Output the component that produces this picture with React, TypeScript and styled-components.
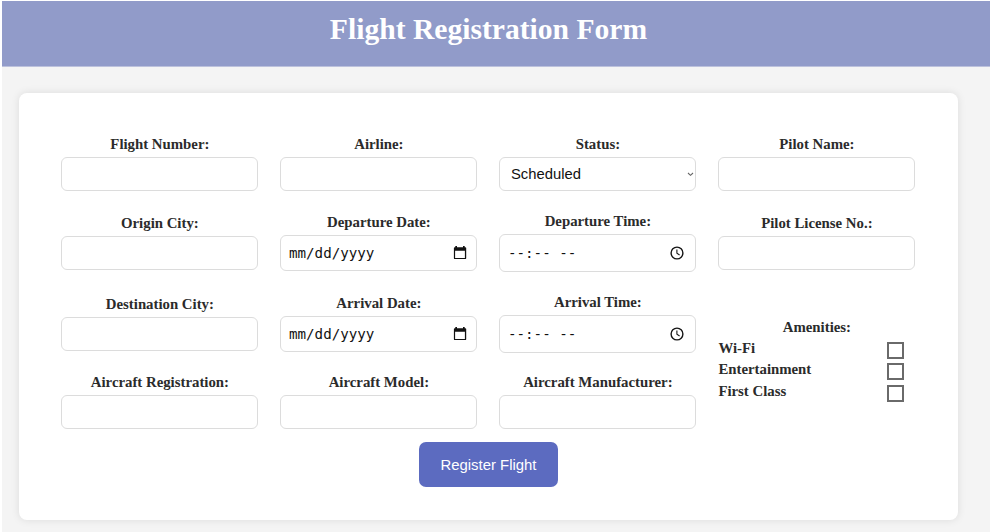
import React from "react";
import styled, { createGlobalStyle } from "styled-components";

const GlobalStyle = createGlobalStyle`
  *, *::before, *::after { box-sizing: border-box; }
  body { margin: 0; background: #fff; overflow: hidden; }
`;

const serif = `"Liberation Serif", "Times New Roman", serif`;
const sans = `"Liberation Sans", Arial, sans-serif`;
const mono = `"DejaVu Sans Mono", monospace`;

const Page = styled.div`
  height: 532px;
  background: #f4f4f4;
  border: solid #fff;
  border-width: 1px 0 0 2px;
  font-family: ${serif};
  color: #2b2b2b;
`;

const Header = styled.header`
  height: 66px;
  padding: 11px 15px 0 0;
  background: #919bc9;
  border-bottom: 1px solid #bcc1dc;
  text-align: center;
`;

const Title = styled.h1`
  margin: 0;
  font-size: 29.6px;
  line-height: 34px;
  font-weight: 700;
  color: #fff;
`;

const Card = styled.form`
  width: 939px;
  height: 427px;
  margin: 26px 0 0 17px;
  padding: 43px 42.4px 0;
  background: #fff;
  border-radius: 8px;
  box-shadow: 0 0 9px rgba(0, 0, 0, 0.1);
`;

const Grid = styled.div`
  display: grid;
  grid-template-columns: repeat(4, 197px);
  grid-template-rows: 55px 59px 58px 55px;
  column-gap: 22px;
  row-gap: 22px;
  align-items: center;
`;

const Field = styled.div`
  display: flex;
  flex-direction: column;
`;

const Label = styled.label`
  margin-bottom: 4px;
  font-size: 14.8px;
  line-height: 17px;
  font-weight: 700;
  text-align: center;
  white-space: nowrap;
`;

const frame = `
  width: 100%;
  border: 1px solid #dcdcdc;
  border-radius: 6px;
  background: #fff;
`;

const TextInput = styled.input`
  ${frame}
  height: 34px;
  padding: 0 10px;
  font: 14.8px ${sans};
  outline: none;
`;

const Picker = styled.div<{ $height: number; $sans?: boolean; $end?: number }>`
  ${frame}
  display: flex;
  align-items: center;
  justify-content: space-between;
  height: ${(p) => p.$height}px;
  padding: 0 ${(p) => p.$end ?? 9}px 0 ${(p) => (p.$sans ? 10.6 : 7.6)}px;
  font-family: ${(p) => (p.$sans ? sans : mono)};
  font-size: ${(p) => (p.$sans ? 14.8 : 14.2)}px;
  color: #111;
  white-space: pre;
`;

const Amenities = styled.div`
  grid-column: 4;
  grid-row: 3 / 5;
  display: flex;
  flex-direction: column;
`;

const Amenity = styled.label`
  display: flex;
  align-items: flex-start;
  justify-content: space-between;
  height: 21.3px;
  padding-right: 11.4px;
  font-size: 14.8px;
  line-height: 17px;
  font-weight: 700;
`;

const Checkbox = styled.input`
  appearance: none;
  width: 17px;
  height: 17px;
  margin: 2px 0 0;
  border: 2px solid #6a6a6a;
  background: #fff;
`;

const Submit = styled.button`
  display: block;
  width: 139px;
  height: 45px;
  margin: 13px auto 0;
  padding: 0;
  border: 0;
  border-radius: 7px;
  background: #5c6bc0;
  color: #fff;
  font: 14.9px ${sans};
`;

const CalendarIcon = () => (
  <svg width="14" height="14" viewBox="0 0 14 14">
    <path d="M2.3 0h1.7v1.2h6V0h1.7v1.2h0.6q0.9 0 0.9 0.9v10.1q0 0.9-0.9 0.9H1.8q-0.9 0-0.9-0.9V2.1q0-0.9 0.9-0.9h0.5zM2.1 4.7v7.2h9.8V4.7z" fill="#111" fillRule="evenodd" />
  </svg>
);

const ClockIcon = () => (
  <svg width="14" height="14" viewBox="0 0 14 14" fill="none" stroke="#151515">
    <circle cx="7" cy="7" r="5.9" strokeWidth="1.4" />
    <path d="M6.9 3.5v3.8l2.7 1.7" strokeWidth="1.1" />
  </svg>
);

const ChevronIcon = () => (
  <svg width="7" height="5" viewBox="0 0 7 5" fill="none" stroke="#666">
    <path d="M1 1l2.5 2.3L6 1" strokeWidth="1.1" />
  </svg>
);

const TextField = ({ label }: { label: string }) => (
  <Field>
    <Label>{label}</Label>
    <TextInput aria-label={label} />
  </Field>
);

const DateField = ({ label }: { label: string }) => (
  <Field>
    <Label>{label}</Label>
    <Picker $height={36}>
      <span>mm/dd/yyyy</span>
      <CalendarIcon />
    </Picker>
  </Field>
);

const TimeField = ({ label }: { label: string }) => (
  <Field>
    <Label>{label}</Label>
    <Picker $height={38} $end={11}>
      <span>--:-- --</span>
      <ClockIcon />
    </Picker>
  </Field>
);

const amenities = ["Wi-Fi", "Entertainment", "First Class"];

export default function App() {
  return (
    <>
      <GlobalStyle />
      <Page>
        <Header>
          <Title>Flight Registration Form</Title>
        </Header>
        <Card>
          <Grid>
            <TextField label="Flight Number:" />
            <TextField label="Airline:" />
            <Field>
              <Label>Status:</Label>
              <Picker $height={34} $sans $end={1}>
                <span>Scheduled</span>
                <ChevronIcon />
              </Picker>
            </Field>
            <TextField label="Pilot Name:" />

            <TextField label="Origin City:" />
            <DateField label="Departure Date:" />
            <TimeField label="Departure Time:" />
            <TextField label="Pilot License No.:" />

            <TextField label="Destination City:" />
            <DateField label="Arrival Date:" />
            <TimeField label="Arrival Time:" />
            <Amenities>
              <Label>Amenities:</Label>
              {amenities.map((name) => (
                <Amenity key={name}>
                  {name}
                  <Checkbox type="checkbox" />
                </Amenity>
              ))}
            </Amenities>

            <TextField label="Aircraft Registration:" />
            <TextField label="Aircraft Model:" />
            <TextField label="Aircraft Manufacturer:" />
          </Grid>
          <Submit type="button">Register Flight</Submit>
        </Card>
      </Page>
    </>
  );
}
